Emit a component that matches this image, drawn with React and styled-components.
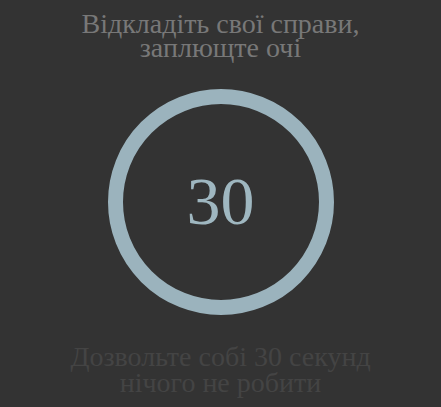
import React from "react";
import styled, { createGlobalStyle } from "styled-components";

const serif = `Tinos, FreeSerif, serif`;

const Global = createGlobalStyle`
  html, body { margin: 0; padding: 0; background: #333333; }
  body { font-family: ${serif}; }
`;

const Page = styled.main`
  width: 441px;
  height: 407px;
  overflow: hidden;
  display: flex;
  flex-direction: column;
  align-items: center;
  padding-top: 12px;
  box-sizing: border-box;
  background: #333333;
  font-family: ${serif};
`;

const Caption = styled.p`
  margin: 0;
  text-align: center;
  font-family: ${serif};
  font-size: 28px;
  line-height: ${(p) => p.$lh}px;
  color: ${(p) => p.$color};
`;

const Ring = styled.div`
  width: 226px;
  height: 226px;
  box-sizing: border-box;
  border: 15px solid #9bb3bd;
  border-radius: 50%;
  margin: 29px 0 29px;
  display: flex;
  align-items: center;
  justify-content: center;
`;

const Count = styled.span`
  font-family: ${serif};
  font-size: 68px;
  line-height: 1;
  color: #9fb7c0;
  margin-top: -2px;
`;

export default function App() {
  return (
    <>
      <Global />
      <Page>
        <Caption $color="#787878" $lh={24}>
          Відкладіть свої справи,
          <br />
          заплющте очі
        </Caption>
        <Ring>
          <Count>30</Count>
        </Ring>
        <Caption $color="#444444" $lh={26}>
          Дозвольте собі 30 секунд
          <br />
          нічого не робити
        </Caption>
      </Page>
    </>
  );
}
